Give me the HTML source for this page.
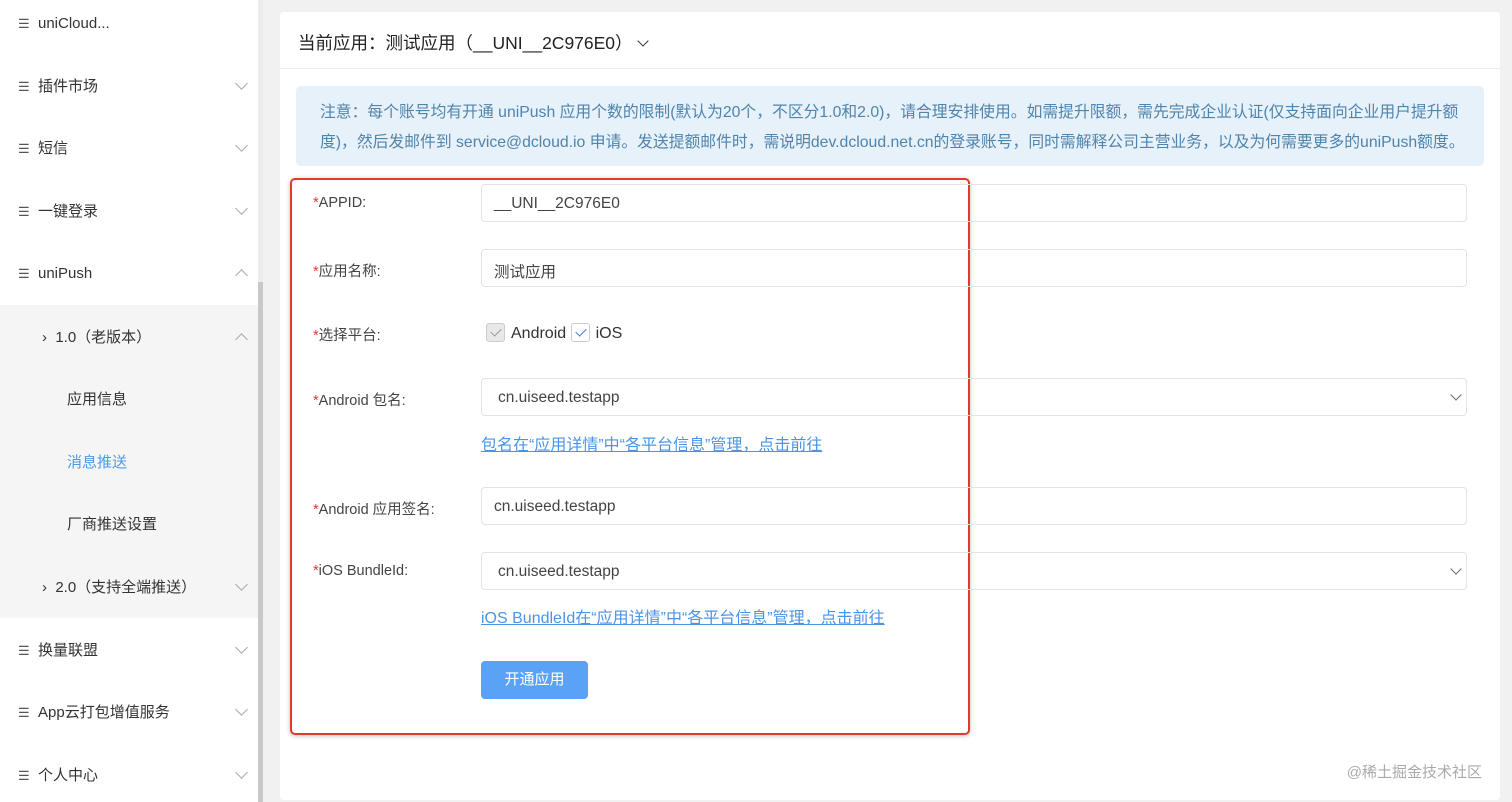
<!DOCTYPE html>
<html><head><meta charset="utf-8"><style>
*{box-sizing:border-box;margin:0;padding:0}
body{width:1512px;height:802px;overflow:hidden;background:#f1f1f1;font-family:"Liberation Sans","Noto Sans CJK SC",sans-serif;color:#333;position:relative;font-size:15px}
.sb{position:absolute;left:0;top:0;width:258px;height:802px;background:#fff}
.scroll{position:absolute;left:258px;top:0;width:5px;height:802px;background:#ececec}
.scroll i{position:absolute;left:0;top:282px;width:5px;height:520px;background:#c8c8c8}
.sub{position:absolute;left:0;top:305px;width:258px;height:313px;background:#f5f5f5}
.it{position:absolute;left:18px;font-size:15px;line-height:20px;color:#333}
.it .ic{display:inline-block;width:14px;color:#555;font-size:13px;margin-right:6px}
.chev{position:absolute;left:237px;width:9px;height:9px;border-right:1px solid #aaa;border-bottom:1px solid #aaa}
.dn{transform:rotate(45deg)}
.up{transform:rotate(-135deg)}
.card{position:absolute;left:280px;top:12px;width:1220px;height:788px;background:#fff;border-radius:4px}
.hd{position:absolute;left:0;top:0;width:100%;height:57px;border-bottom:1px solid #eee;padding:18px 0 0 18px;font-size:17.5px;color:#222}
.note{position:absolute;left:16px;top:74px;width:1188px;height:80px;background:#e6f1fa;border-radius:5px;padding:12px 14px 0 24px;color:#4f84ad;font-size:15.8px;line-height:30px}
.red{position:absolute;left:290px;top:178px;width:680px;height:557px;border:2px solid #e0392e;border-radius:5px;box-shadow:0 1px 5px rgba(0,0,0,.25)}
.lb{position:absolute;left:313px;font-size:14.5px;color:#444}
.lb b{color:#d63b2f;font-weight:normal}
.inp{position:absolute;left:481px;width:986px;height:38px;border:1px solid #e3e3e3;border-radius:4px;padding:10px 0 0 12px;font-size:15.5px;color:#444}
.sel:after{content:"";position:absolute;right:6px;top:12px;width:7px;height:7px;border-right:1px solid #666;border-bottom:1px solid #666;transform:rotate(45deg)}
.lnk{position:absolute;left:481px;color:#4a94e8;text-decoration:underline;font-size:16px}
.cb{display:inline-block;width:19px;height:19px;border:1px solid #ccc;border-radius:3px;vertical-align:-4px;position:relative;margin-right:6px}
.cb:after{content:"";position:absolute;left:6px;top:2px;width:5px;height:9px;border-right:1.5px solid #999;border-bottom:1.5px solid #999;transform:rotate(45deg)}
.cb.on:after{border-color:#3a7be0}
.btn{position:absolute;left:481px;top:661px;width:107px;height:38px;background:#5aa2f5;border-radius:4px;color:#fff;text-align:center;line-height:38px;font-size:15px}
</style></head><body>
<div class="sb">
<div class="sub"></div>
<div class="it" style="top:14px"><span class="ic">☰</span>uniCloud...</div>
<div class="it" style="top:77px"><span class="ic">☰</span>插件市场</div><div class="chev dn" style="top:79px"></div>
<div class="it" style="top:139px"><span class="ic">☰</span>短信</div><div class="chev dn" style="top:141px"></div>
<div class="it" style="top:202px"><span class="ic">☰</span>一键登录</div><div class="chev dn" style="top:204px"></div>
<div class="it" style="top:264px"><span class="ic">☰</span>uniPush</div><div class="chev up" style="top:271px"></div>
<div class="it" style="top:328px;left:42px">›&nbsp; 1.0（老版本）</div><div class="chev up" style="top:335px"></div>
<div class="it" style="top:390px;left:67px">应用信息</div>
<div class="it" style="top:453px;left:67px;color:#4a9bf0">消息推送</div>
<div class="it" style="top:515px;left:67px">厂商推送设置</div>
<div class="it" style="top:578px;left:42px">›&nbsp; 2.0（支持全端推送）</div><div class="chev dn" style="top:580px"></div>
<div class="it" style="top:641px"><span class="ic">☰</span>换量联盟</div><div class="chev dn" style="top:643px"></div>
<div class="it" style="top:703px"><span class="ic">☰</span>App云打包增值服务</div><div class="chev dn" style="top:705px"></div>
<div class="it" style="top:766px"><span class="ic">☰</span>个人中心</div><div class="chev dn" style="top:768px"></div>
</div>
<div class="scroll"><i></i></div>
<div class="card">
<div class="hd">当前应用：测试应用（__UNI__2C976E0）<span style="display:inline-block;width:8px;height:8px;border-right:1.5px solid #333;border-bottom:1.5px solid #333;transform:rotate(45deg);margin-left:6px;vertical-align:4px"></span></div>
<div class="note">注意：每个账号均有开通 uniPush 应用个数的限制(默认为20个，不区分1.0和2.0)，请合理安排使用。如需提升限额，需先完成企业认证(仅支持面向企业用户提升额度)，然后发邮件到 service@dcloud.io 申请。发送提额邮件时，需说明dev.dcloud.net.cn的登录账号，同时需解释公司主营业务，以及为何需要更多的uniPush额度。</div>
<div style="position:absolute;right:18px;bottom:18px;color:#aaa;font-size:15px">@稀土掘金技术社区</div>
</div>
<div class="red"></div>
<div class="lb" style="top:195px"><b>*</b>APPID:</div>
<div class="inp" style="top:184px">__UNI__2C976E0</div>
<div class="lb" style="top:260px"><b>*</b>应用名称:</div>
<div class="inp" style="top:249px">测试应用</div>
<div class="lb" style="top:324px"><b>*</b>选择平台:</div>
<div style="position:absolute;left:486px;top:323px;font-size:16px"><span class="cb" style="background:#e8e8e8"></span>Android <span class="cb on" style="margin-left:0"></span>iOS</div>
<div class="lb" style="top:389px"><b>*</b>Android 包名:</div>
<div class="inp sel" style="top:378px;padding-left:16px">cn.uiseed.testapp</div>
<div class="lnk" style="top:431px">包名在“应用详情”中“各平台信息”管理，点击前往</div>
<div class="lb" style="top:498px"><b>*</b>Android 应用签名:</div>
<div class="inp" style="top:487px">cn.uiseed.testapp</div>
<div class="lb" style="top:563px"><b>*</b>iOS BundleId:</div>
<div class="inp sel" style="top:552px;padding-left:16px">cn.uiseed.testapp</div>
<div class="lnk" style="top:604px">iOS BundleId在“应用详情”中“各平台信息”管理，点击前往</div>
<div class="btn">开通应用</div>
</body></html>
